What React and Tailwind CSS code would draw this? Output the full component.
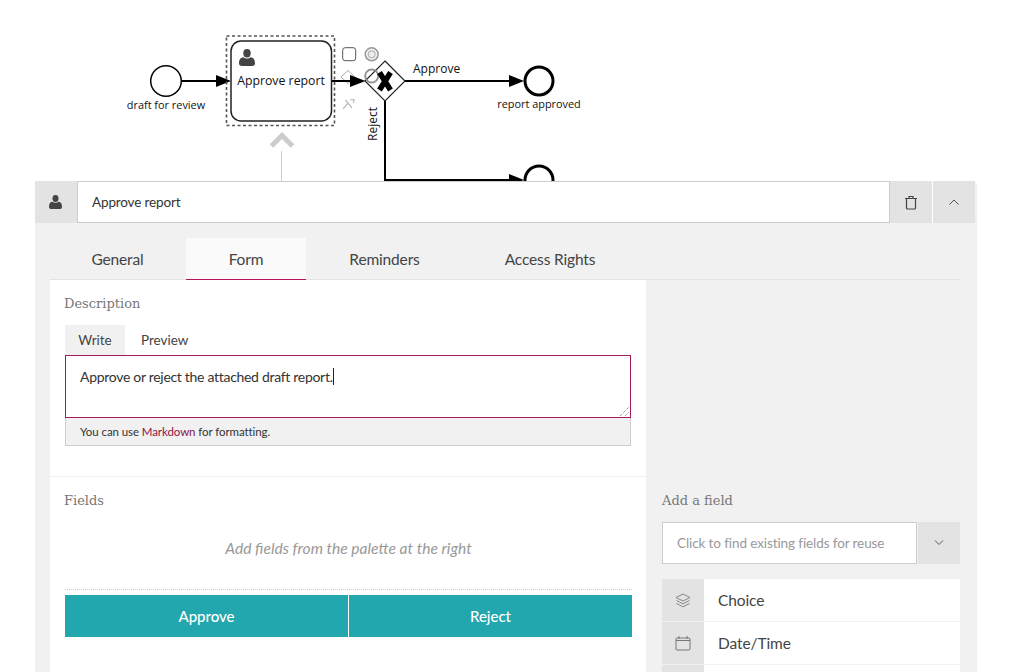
const UI = "font-['Lato',sans-serif]";
const SLAB = "font-['DejaVu_Serif',serif]";

function UserGlyph({ className }) {
  return (
    <svg viewBox="0 0 16 17" className={className} fill="currentColor">
      <ellipse cx="8" cy="4.2" rx="3.7" ry="4.2" />
      <path d="M0 14.2c0-4 1.8-5.8 4.4-6 1 .9 2.2 1.3 3.6 1.3s2.6-.4 3.6-1.3c2.6.2 4.4 2 4.4 6 0 1.800-1.200 2.800-2.800 2.800H2.800C1.200 17 0 16 0 14.200z" />
    </svg>
  );
}

function Diagram() {
  const font = { fontFamily: "'Open Sans', sans-serif", fill: "#111" };
  return (
    <svg width="1024" height="181" viewBox="0 0 1024 181" className="block">
      <path d="M348 70.500L355 77L348 83.500L341 77Z" fill="#fff" stroke="#aaa" strokeWidth="1" />
      <g stroke="#000" fill="none">
        <circle cx="166" cy="81" r="15.300" strokeWidth="1.500" fill="#fff" />
        <path d="M181 81H222" strokeWidth="2" />
        <path d="M332 81H355" strokeWidth="2" />
        <path d="M405 81H515" strokeWidth="2" />
        <path d="M385 100V180H515" strokeWidth="2" />
        <circle cx="539" cy="81" r="14" strokeWidth="3" fill="#fff" />
        <circle cx="539" cy="180" r="14" strokeWidth="3" fill="#fff" />
      </g>
      <g fill="#000">
        <path d="M216 75L231 81L216 87Z" />
        <path d="M509 75L524 81L509 87Z" />
        <path d="M509 174L524 180L509 186Z" />
      </g>
      <rect x="226.500" y="36" width="108" height="89.500" fill="none" stroke="#555" strokeDasharray="3 2.500" strokeWidth="1.600" />
      <rect x="231" y="41" width="100.500" height="80" rx="10" fill="#fff" stroke="#222" strokeWidth="1.500" />
      <foreignObject x="239" y="49" width="16" height="17">
        <UserGlyph className="w-4 h-[17px] text-[#444]" />
      </foreignObject>
      <text x="281" y="85" textAnchor="middle" fontSize="12.300" style={font}>Approve report</text>
      <text x="166" y="109" textAnchor="middle" fontSize="10.900" style={font}>draft for review</text>
      <text x="539" y="108" textAnchor="middle" fontSize="10.900" style={font}>report approved</text>
      <text x="413" y="73" fontSize="12" style={font}>Approve</text>
      <text x="377" y="141" fontSize="12" transform="rotate(-90 377 141)" style={font}>Reject</text>

      <rect x="342.700" y="47.700" width="13" height="13" rx="2.500" fill="#fff" stroke="#555" strokeWidth="1" />
      <circle cx="371.700" cy="54.300" r="6.500" fill="#eee" stroke="#999" strokeWidth="1.500" />
      <circle cx="371.700" cy="54.300" r="3.500" fill="none" stroke="#aaa" strokeWidth="1" />
      <path d="M343 109L348 103M350 100L354 99.500L353.500 103M345.500 100L352 108" stroke="#bbb" strokeWidth="1.200" fill="none" />
      <path d="M350 75L365.500 81L350 87Z" fill="#000" />
      <path d="M385 61L405 81L385 101L365 81Z" fill="#fff" stroke="#222" strokeWidth="1.200" />
      <circle cx="371.700" cy="76" r="6.500" fill="none" stroke="#888" strokeWidth="2" opacity="0.900" />
      <path d="M379.500 72.500L390.500 90M390.500 72.500L379.500 90" stroke="#000" strokeWidth="5.500" fill="none" />
      <path d="M271.500 146L282 135.500L292.500 146" stroke="#ccc" strokeWidth="5" fill="none" />
      <path d="M281.500 151V181" stroke="#ccc" strokeWidth="1" />
    </svg>
  );
}

function Tab({ children, active, className }) {
  return (
    <div className={`h-[42px] flex items-center justify-center text-[15.500px] tracking-[-0.15px] text-[#444] ${active ? "pt-[2px] bg-[#fafafa] border-b border-[#b5135f]" : "pt-px"} ${className}`}>
      {children}
    </div>
  );
}

function FieldRow({ icon, label, grow }) {
  return (
    <div className={`flex bg-white ${grow ? "h-[42px]" : "h-[42px] mb-px"}`}>
      <div className="w-[42px] bg-[#e3e3e3] flex items-center justify-center text-[#777]">{icon}</div>
      <div className="pl-[14px] pt-[2px] flex items-center text-[15.500px] tracking-[-0.1px] text-[#444]">{label}</div>
    </div>
  );
}

export default function App() {
  return (
    <div className={`w-[1024px] h-[672px] overflow-hidden bg-white ${UI}`}>
      <Diagram />
      <div className="ml-[35px] w-[942px]">
        <div className="relative z-10 flex w-[940px] h-[42px] -mb-[40px]">
          <div className="w-[42px] pr-px bg-[#e3e3e3] flex items-center justify-center">
            <UserGlyph className="w-[13px] h-[14px] text-[#444]" />
          </div>
          <div className="w-[813px] bg-white border border-[#ccc] pl-[14px] flex items-center text-[13.500px] tracking-[-0.15px] text-[#333]">Approve report</div>
          <div className="w-[42px] bg-[#e3e3e3] flex items-center justify-center">
            <svg width="14" height="15" viewBox="0 0 14 15" fill="none" stroke="#444" strokeWidth="1.200">
              <path d="M1 3.500H13M2.500 3.500V13a1 1 0 0 0 1 1h7a1 1 0 0 0 1-1V3.500M5 3.500V1.500h4v2" />
            </svg>
          </div>
          <div className="w-px bg-white" />
          <div className="w-[42px] bg-[#e3e3e3] flex items-center justify-center">
            <svg width="10" height="6" viewBox="0 0 10 6" fill="none" stroke="#555" strokeWidth="1">
              <path d="M.5 5.500L5 1l4.500 4.500" />
            </svg>
          </div>
        </div>
        <div className="bg-[#f1f1f1] h-[489px] pt-[40px] pl-[15px] pr-[17px]">
          <div className="pt-[15px]">
            <div className="flex h-[42px] w-[910px] border-b border-[#e3e3e3]">
              <Tab className="w-[136px] pr-px">General</Tab>
              <Tab active className="w-[120px]">Form</Tab>
              <Tab className="w-[157px]">Reminders</Tab>
              <Tab className="w-[174px]">Access Rights</Tab>
            </div>
          </div>
          <div className="flex">
            <div className="w-[596px] bg-white">
              <div className="h-[197px] pl-[14px] pr-[15px] pt-[15px] border-b border-[#f1f1f1]">
                <div className={`h-[17px] leading-[17px] text-[13px] text-[#777] ${SLAB}`}>Description</div>
                <div className="mt-[13px] ml-px flex h-[30px] text-[13.500px] text-[#444]">
                  <div className="w-[60px] bg-[#f1f1f1] flex items-center justify-center">Write</div>
                  <div className="pl-[16px] flex items-center">Preview</div>
                </div>
                <div className="ml-px">
                  <div className="relative h-[63px] border border-[#a3195b] bg-white pl-[14px] pt-[11px] text-[14px] tracking-[-0.3px] leading-[20px] text-[#333]">
                    <span className="border-r border-[#222]">Approve or reject the attached draft report.</span>
                    <svg width="9" height="9" viewBox="0 0 9 9" className="absolute right-px bottom-px" stroke="#777" strokeDasharray="1 1">
                      <path d="M0 9L9 0M5 9L9 5" />
                    </svg>
                  </div>
                  <div className="h-[28px] bg-[#f1f1f1] border-x border-b border-[#ccc] pl-[14px] flex items-center text-[11.500px] tracking-[-0.08px] text-[#333]">
                    <span>You can use <span className="text-[#8a1345]">Markdown</span> for formatting.</span>
                  </div>
                </div>
              </div>
              <div className="h-[195px] pl-[15px] pr-[14px] pt-[15px]">
                <div className={`h-[17px] leading-[17px] text-[13px] text-[#777] ${SLAB} -ml-px`}>Fields</div>
                <div className="h-[80px] pt-[27px] text-center italic text-[15.600px] leading-[24px] text-[#999]">Add fields from the palette at the right</div>
                <div className="border-t border-dotted border-[#ccc] pt-[5px]">
                  <div className="flex h-[42px] bg-[#21a7ad] text-white text-[15px] font-medium">
                    <div className="w-[284px] flex items-center justify-center border-r border-white">Approve</div>
                    <div className="flex-1 flex items-center justify-center">Reject</div>
                  </div>
                </div>
              </div>
            </div>
            <div className="w-[298px] ml-[16px] pt-[197px]">
              <div className={`h-[17px] mt-[15px] leading-[17px] text-[13px] text-[#777] ${SLAB}`}>Add a field</div>
              <div className="flex h-[42px] mt-[13px]">
                <div className="w-[255px] bg-white border border-[#ccc] pl-[14px] pt-px flex items-center text-[13.500px] tracking-[-0.1px] text-[#999]">Click to find existing fields for reuse</div>
                <div className="w-px" />
                <div className="w-[42px] bg-[#e3e3e3] flex items-center justify-center">
                  <svg width="10" height="6" viewBox="0 0 10 6" fill="none" stroke="#555" strokeWidth="1">
                    <path d="M1 .5L5 4.500 9 .5" />
                  </svg>
                </div>
              </div>
              <div className="mt-[15px]">
                <FieldRow label="Choice" icon={
                  <svg width="16" height="15" viewBox="0 0 16 15" fill="none" stroke="#888" strokeWidth="1">
                    <path d="M8 1L15 4.500 8 8 1 4.500Z" />
                    <path d="M1.500 7.500L8 10.800 14.500 7.500M1.500 10.500L8 13.800 14.500 10.500" />
                  </svg>
                } />
                <FieldRow label="Date/Time" icon={
                  <svg width="16" height="16" viewBox="0 0 16 16" fill="none" stroke="#777" strokeWidth="1">
                    <rect x="1" y="3" width="14" height="12" rx="1" />
                    <path d="M4 1v3M12 1v3M1 5.500h14" />
                  </svg>
                } />
                <FieldRow label="" grow icon={null} />
              </div>
            </div>
          </div>
        </div>
      </div>
    </div>
  );
}
